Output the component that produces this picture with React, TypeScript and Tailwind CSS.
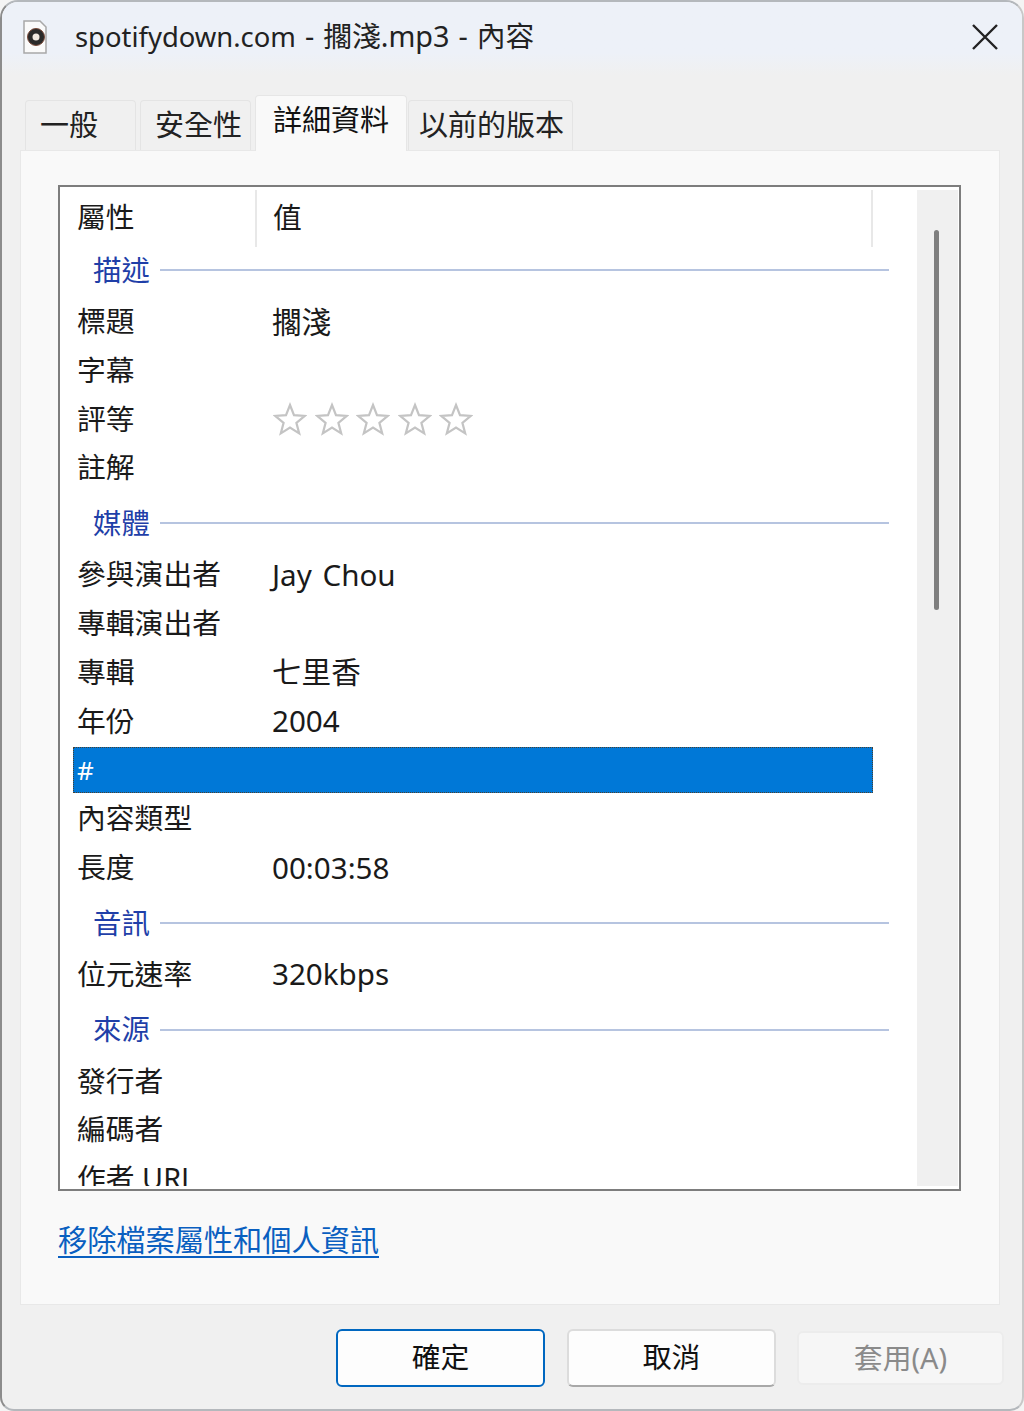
type Row = { label: string; value?: string; stars?: boolean; selected?: boolean };
type Group = { title: string; first?: boolean; rows: Row[] };

const groups: Group[] = [
  {
    title: "描述",
    first: true,
    rows: [{ label: "標題", value: "擱淺" }, { label: "字幕" }, { label: "評等", stars: true }, { label: "註解" }],
  },
  {
    title: "媒體",
    rows: [
      { label: "參與演出者", value: "Jay Chou" },
      { label: "專輯演出者" },
      { label: "專輯", value: "七里香" },
      { label: "年份", value: "2004" },
      { label: "#", selected: true },
      { label: "內容類型" },
      { label: "長度", value: "00:03:58" },
    ],
  },
  { title: "音訊", rows: [{ label: "位元速率", value: "320kbps" }] },
  { title: "來源", rows: [{ label: "發行者" }, { label: "編碼者" }, { label: "作者 URL" }] },
];

function Star() {
  return (
    <svg width="34" height="34" viewBox="0 0 34 34" fill="none" stroke="#c4c4c4" strokeWidth="2.2">
      <path d="M17 3l4 10.2 10.8.7-8.4 6.9 2.8 10.6L17 25.6l-9.2 5.8 2.8-10.6-8.4-6.9 10.8-.7z" />
    </svg>
  );
}

function Tab({ label, active, className }: { label: string; active?: boolean; className: string }) {
  if (active) {
    return (
      <div className={`${className} -mb-px flex h-[56px] items-start justify-center rounded-t border border-b-0 border-[#e6e6e6] bg-[#f9f9f9] pt-[9px] text-[#111]`}>
        {label}
      </div>
    );
  }
  return (
    <div className={`${className} flex h-[50px] items-center rounded-t border border-b-0 border-[#e4e4e4] bg-[#f0f0f0] pb-[3px] text-[#222]`}>
      {label}
    </div>
  );
}

export default function App() {
  return (
    <div className="h-[1411px] w-[1024px] overflow-hidden bg-[#f4f4f4] text-[28.8px] leading-none text-[#1a1a1a] [font-family:'Noto_Sans','Noto_Sans_CJK_TC',sans-serif]">
      <div className="flex h-full flex-col rounded-t-[18px] rounded-b-[14px] border-2 border-[#b4b8bc] border-r-[#c8c8c8] border-l-[#8c8c8c] bg-[#f0f0f0]">
        {/* title bar */}
        <div className="flex h-[73px] shrink-0 items-center rounded-t-[16px] bg-gradient-to-b from-[#edf1f8] from-70% to-[#f0f0f0] pr-[23px] pb-[4px] pl-[21px]">
          <svg width="24" height="34" viewBox="0 0 24 34" className="mr-[28px] shrink-0">
            <path d="M1 1h16l6 6v26H1z" fill="#fafafa" stroke="#a8a8a8" strokeWidth="1.5" />
            <circle cx="13" cy="17" r="8.5" fill="#2a2a2a" />
            <circle cx="13" cy="17" r="3.5" fill="#f0e8e0" />
            <circle cx="13" cy="17" r="8.5" fill="none" stroke="#7a4a3a" strokeWidth="1" />
          </svg>
          <span className="flex-1 whitespace-nowrap text-[#222] [word-spacing:1.5px]">
            <span className="text-[27.4px]">spotifydown.com</span> - 擱淺.mp3 - 內容
          </span>
          <svg width="28" height="28" viewBox="0 0 28 28" stroke="#222" strokeWidth="2.4">
            <path d="M2 2l24 24M26 2L2 26" />
          </svg>
        </div>

        {/* tabs */}
        <div className="z-10 mt-[19px] flex h-[56px] shrink-0 items-end pl-[23px] text-[29px]">
          <Tab label="一般" className="w-[111px] pl-[14px]" />
          <Tab label="安全性" className="ml-[4px] w-[111px] pl-[14px]" />
          <Tab label="詳細資料" className="ml-[4px] w-[152px]" active />
          <Tab label="以前的版本" className="ml-[1px] w-[165px] pl-[10px]" />
        </div>

        {/* panel */}
        <div className="mr-[22px] ml-[18px] flex h-[1155px] shrink-0 flex-col border border-[#e8e8e8] bg-[#f9f9f9] pt-[34px] pr-[38px] pl-[37px]">
          <div className="flex h-[1006px] border-2 border-[#7d7d7d] bg-white py-[3px] pr-[1px]">
            <div className="flex-1 overflow-hidden pl-[13px]">
              <div className="flex h-[57px] w-[800px]">
                <div className="flex w-[184px] items-center border-r-2 border-[#e8e8e8] pb-[2px] pl-[4px]">屬性</div>
                <div className="flex flex-1 items-center border-r-2 border-[#e8e8e8] pb-[2px] pl-[16px]">值</div>
              </div>
              {groups.map((group) => (
                <div key={group.title}>
                  <div className={`flex items-center pr-[28px] pl-[20px] text-[28.4px] text-[#1f3fa8] ${group.first ? "h-[50px] pb-[4px]" : "h-[58px] pt-[4px]"}`}>
                    <span>{group.title}</span>
                    <div className="ml-[10px] h-[2px] flex-1 bg-[#b6c4e0]" />
                  </div>
                  {group.rows.map((row) => (
                    <div key={row.label} className="flex h-[48.8px] w-[800px] items-center">
                      <div
                        className={`flex w-full items-center ${row.selected ? "h-[46px] border border-dotted border-[#4a4030] bg-[#0078d7] pl-[3px] text-white" : "pl-[4px]"}`}
                      >
                        <span className={`w-[195px] shrink-0 whitespace-nowrap ${row.selected ? "text-[26px]" : ""}`}>{row.label}</span>
                        {row.value && <span className="text-[29.6px] [word-spacing:3px]">{row.value}</span>}
                        {row.stars && (
                          <span className="ml-[1px] flex gap-[7.5px]">
                            <Star />
                            <Star />
                            <Star />
                            <Star />
                            <Star />
                          </span>
                        )}
                      </div>
                    </div>
                  ))}
                </div>
              ))}
            </div>
            <div className="w-[41px] shrink-0 bg-[#f0f0f0] pt-[40px] pl-[17px]">
              <div className="h-[380px] w-[5px] rounded-full bg-[#7f7f7f]" />
            </div>
          </div>
          <div className="mt-[33px] w-fit border-b-2 border-[#0a5fc0] text-[29.2px] leading-[32px] text-[#0a5fc0]">
            移除檔案屬性和個人資訊
          </div>
        </div>

        {/* buttons */}
        <div className="mt-[24px] flex items-center pl-[334px]">
          <button className="h-[58px] w-[209px] rounded-[6px] border-2 border-[#0067c0] bg-[#fdfdfd] pb-[2px] text-[#111]">確定</button>
          <button className="ml-[22px] h-[58px] w-[209px] rounded-[6px] border-2 border-[#dcdcdc] border-b-[#a8a8a8] bg-[#fdfdfd] pb-[2px] text-[#111]">取消</button>
          <button className="ml-[21px] h-[54px] w-[207px] rounded-[6px] border-2 border-[#ececec] bg-[#f6f6f6] text-[#8a8a8a]">套用(A)</button>
        </div>
      </div>
    </div>
  );
}
